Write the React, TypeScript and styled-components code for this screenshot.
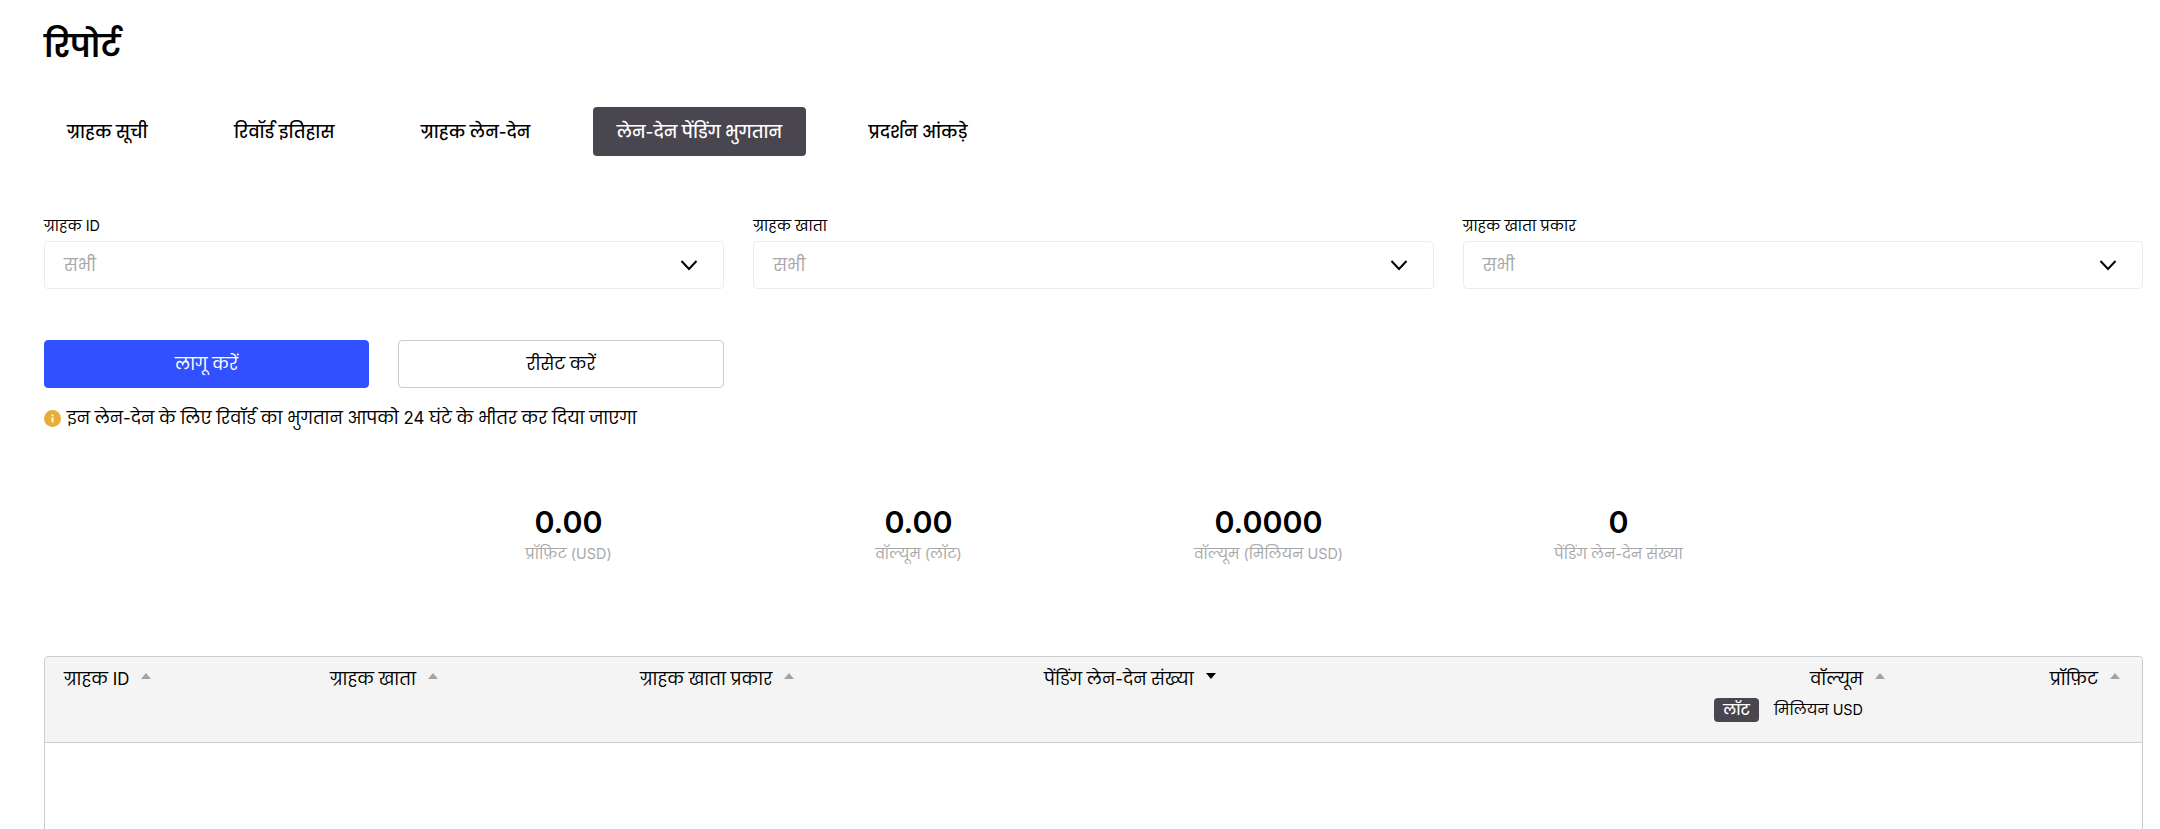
import React from 'react';
import styled, { createGlobalStyle } from 'styled-components';

const GlobalStyle = createGlobalStyle`
  html, body {
    margin: 0;
    padding: 0;
    height: 100%;
    overflow: hidden;
    background: #fff;
    color: #000;
    font-family: Inter, Poppins, "Noto Sans", sans-serif;
  }
  * { box-sizing: border-box; }
`;

const Page = styled.div`
  padding: 0 17px 0 44px;
  height: 829px;
  overflow: hidden;
`;

const Title = styled.h1`
  margin: 0;
  padding-top: 24px;
  height: 107px;
  font-size: 31px;
  line-height: 44px;
  font-weight: 600;
`;

const Tabs = styled.div`
  display: flex;
  gap: 38.5px;
  margin-left: -1px;
`;

const Tab = styled.div<{ $active?: boolean }>`
  height: 49px;
  padding: 1px 24px 0;
  display: flex;
  align-items: center;
  border-radius: 4px;
  font-size: 16.9px;
  font-weight: 500;
  background: ${p => (p.$active ? '#4a4650' : 'transparent')};
  color: ${p => (p.$active ? '#fff' : '#000')};
`;

const Filters = styled.div`
  display: grid;
  grid-template-columns: repeat(3, 1fr);
  gap: 29px;
  margin-top: 60px;
`;

const Label = styled.div`
  font-size: 14.4px;
  line-height: 20px;
  height: 25px;
`;

const Select = styled.div`
  height: 48px;
  padding: 0 24px 0 19px;
  display: flex;
  align-items: center;
  justify-content: space-between;
  border: 1px solid #ececec;
  border-radius: 4px;
  font-size: 16.8px;
  color: #a8a8a8;
`;

const Actions = styled.div`
  display: grid;
  grid-template-columns: 325px 326px;
  gap: 29px;
  margin-top: 51px;
`;

const Button = styled.button<{ $primary?: boolean }>`
  height: 48px;
  border-radius: 4px;
  font-family: inherit;
  font-size: 16.8px;
  font-weight: 400;
  background: ${p => (p.$primary ? '#3150ff' : '#fff')};
  color: ${p => (p.$primary ? '#fff' : '#000')};
  border: 1px solid ${p => (p.$primary ? '#3150ff' : '#ccc')};
`;

const Notice = styled.div`
  display: flex;
  align-items: center;
  gap: 6px;
  margin-top: 18px;
  height: 24px;
  font-size: 16.8px;
`;

const Stats = styled.div`
  display: grid;
  grid-template-columns: repeat(4, 350px);
  justify-content: center;
  margin-top: 72px;
`;

const Stat = styled.div`
  text-align: center;
`;

const StatValue = styled.div`
  font-size: 30.4px;
  line-height: 41px;
  font-weight: 600;
`;

const StatLabel = styled.div`
  margin-top: 1px;
  font-size: 14.4px;
  line-height: 20px;
  color: #a8a8a8;
`;

const Table = styled.div`
  margin-top: 92px;
  height: 300px;
  border: 1px solid #ccc;
  border-radius: 4px 4px 0 0;
`;

const Header = styled.div`
  display: grid;
  grid-template-columns: 266px 310px 404px 677px 205px 1fr;
  height: 86px;
  padding-top: 9px;
  background: #f4f4f4;
  border-bottom: 1px solid #ccc;
  border-radius: 4px 4px 0 0;
  font-size: 16.8px;
`;

const Cell = styled.div<{ $right?: boolean }>`
  display: flex;
  flex-direction: column;
  align-items: ${p => (p.$right ? 'flex-end' : 'flex-start')};
  padding: 0 ${p => (p.$right ? '22px' : '19px')} 0 19px;
  white-space: nowrap;
`;

const CellTitle = styled.div`
  display: flex;
  align-items: flex-start;
  gap: 12px;
  line-height: 26px;
`;

const Caret = styled.span<{ $down?: boolean }>`
  margin-top: 7px;
  width: 0;
  height: 0;
  border-left: 5.5px solid transparent;
  border-right: 5.5px solid transparent;
  ${p => (p.$down ? 'border-top: 6px solid #000;' : 'border-bottom: 6px solid #a3a3a3;')}
`;

const Units = styled.div`
  display: flex;
  align-items: center;
  gap: 15px;
  margin-top: 6px;
  margin-right: 22px;
  font-size: 14.4px;
`;

const Unit = styled.span<{ $active?: boolean }>`
  height: 24px;
  display: flex;
  align-items: center;
  border-radius: 4px;
  ${p => (p.$active ? 'padding: 0 9px; background: #4a4650; color: #fff; font-weight: 500;' : '')}
`;

const Chevron = () => (
  <svg width="20" height="20" viewBox="0 0 20 20" fill="none" stroke="#000" strokeWidth="2">
    <path d="M2.5 6l7.5 8 7.5-8" />
  </svg>
);

const InfoIcon = () => (
  <svg width="17" height="17" viewBox="0 0 17 17">
    <circle cx="8.5" cy="8.5" r="8.5" fill="#e9ad33" />
    <rect x="7.6" y="7.4" width="1.8" height="5" fill="#fff" />
    <rect x="7.6" y="4.4" width="1.8" height="1.8" fill="#fff" />
  </svg>
);

const tabs = ['ग्राहक सूची', 'रिवॉर्ड इतिहास', 'ग्राहक लेन-देन', 'लेन-देन पेंडिंग भुगतान', 'प्रदर्शन आंकड़े'];
const filters = ['ग्राहक ID', 'ग्राहक खाता', 'ग्राहक खाता प्रकार'];
const stats = [
  ['0.00', 'प्रॉफ़िट (USD)'],
  ['0.00', 'वॉल्यूम (लॉट)'],
  ['0.0000', 'वॉल्यूम (मिलियन USD)'],
  ['0', 'पेंडिंग लेन-देन संख्या'],
];

const App = () => (
  <Page>
    <GlobalStyle />
    <Title>रिपोर्ट</Title>
    <Tabs>
      {tabs.map((t, i) => (
        <Tab key={t} $active={i === 3}>{t}</Tab>
      ))}
    </Tabs>
    <Filters>
      {filters.map(f => (
        <div key={f}>
          <Label>{f}</Label>
          <Select>
            सभी
            <Chevron />
          </Select>
        </div>
      ))}
    </Filters>
    <Actions>
      <Button $primary>लागू करें</Button>
      <Button>रीसेट करें</Button>
    </Actions>
    <Notice>
      <InfoIcon />
      इन लेन-देन के लिए रिवॉर्ड का भुगतान आपको 24 घंटे के भीतर कर दिया जाएगा
    </Notice>
    <Stats>
      {stats.map(([value, label]) => (
        <Stat key={label}>
          <StatValue>{value}</StatValue>
          <StatLabel>{label}</StatLabel>
        </Stat>
      ))}
    </Stats>
    <Table>
      <Header>
        <Cell><CellTitle>ग्राहक ID<Caret /></CellTitle></Cell>
        <Cell><CellTitle>ग्राहक खाता<Caret /></CellTitle></Cell>
        <Cell><CellTitle>ग्राहक खाता प्रकार<Caret /></CellTitle></Cell>
        <Cell><CellTitle>पेंडिंग लेन-देन संख्या<Caret $down /></CellTitle></Cell>
        <Cell $right>
          <CellTitle>वॉल्यूम<Caret /></CellTitle>
          <Units>
            <Unit $active>लॉट</Unit>
            <Unit>मिलियन USD</Unit>
          </Units>
        </Cell>
        <Cell $right><CellTitle>प्रॉफ़िट<Caret /></CellTitle></Cell>
      </Header>
    </Table>
  </Page>
);

export default App;
